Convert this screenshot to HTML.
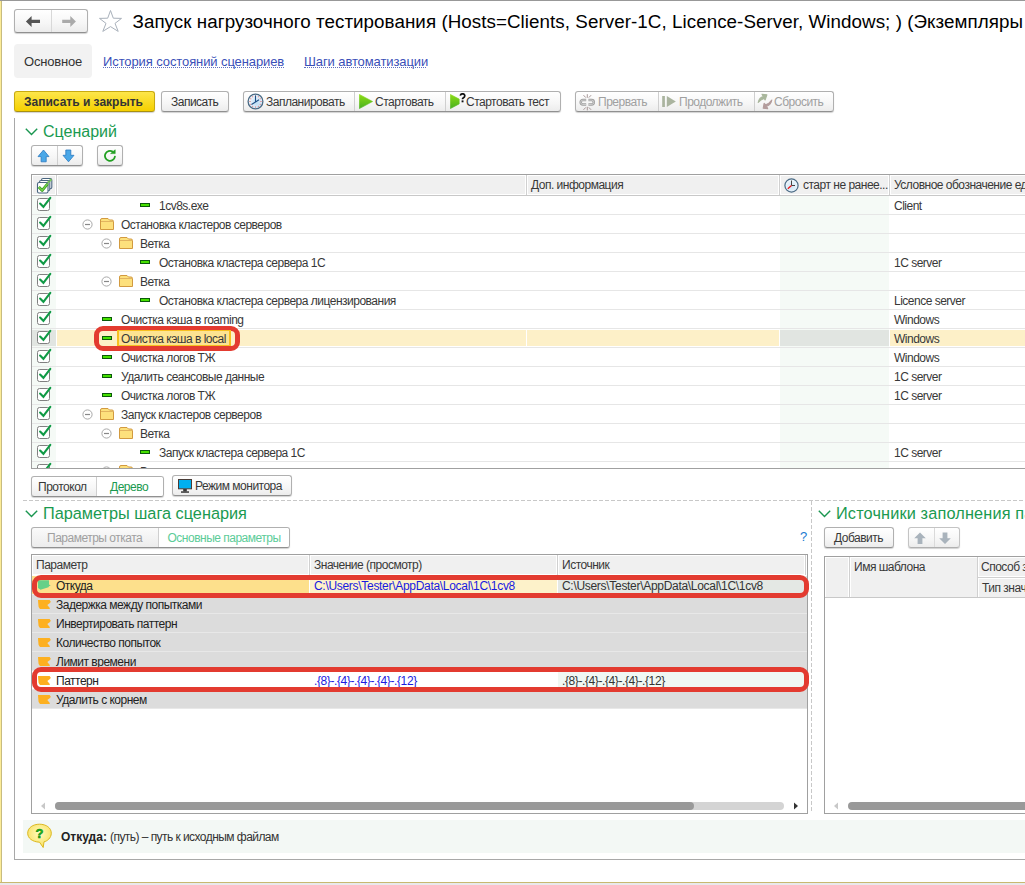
<!DOCTYPE html><html><head><meta charset="utf-8"><style>
*{box-sizing:border-box;margin:0;padding:0}
html,body{width:1025px;height:885px;overflow:hidden;background:#fff}
body{position:relative;font-family:"Liberation Sans",sans-serif;color:#333}
.t{position:absolute;white-space:nowrap;font-size:12px;letter-spacing:-0.5px;color:#383838}
.btn{position:absolute;border:1px solid #b0b0b0;border-bottom-color:#909090;border-radius:3px;background:linear-gradient(#ffffff,#f6f6f6 60%,#ececec);box-shadow:0 1px 1px rgba(0,0,0,0.18)}
.sep{position:absolute;top:0;bottom:0;width:1px;background:#cfcfcf}
.hl{position:absolute;height:1px;background:#e4e4e4}
</style></head><body>
<div style="position:absolute;left:0px;top:0px;width:1025px;height:1px;background:#989898"></div>
<div style="position:absolute;left:0px;top:1px;width:1px;height:882px;background:#fcec98"></div>
<div style="position:absolute;left:1px;top:1px;width:1px;height:882px;background:#c8bc80"></div>
<div style="position:absolute;left:0px;top:882px;width:1025px;height:1px;background:#c8b870"></div>
<div style="position:absolute;left:0px;top:883px;width:1025px;height:2px;background:#e9e9ec"></div>
<div class="btn" style="left:14px;top:9px;width:74px;height:24px"><div class="sep" style="left:36px;background:#d8d8d8"></div></div>
<svg style="position:absolute;left:25px;top:16px" width="16" height="12" viewBox="0 0 16 12"><path d="M0.9 5.4 L6.6 0 L6.6 3.8 L15 3.8 L15 6.9 L6.6 6.9 L6.6 11 Z" fill="#555"/></svg>
<svg style="position:absolute;left:62px;top:16px" width="16" height="12" viewBox="0 0 16 12"><path d="M13.9 5.4 L8.3 0 L8.3 3.8 L0.2 3.8 L0.2 6.9 L8.3 6.9 L8.3 11 Z" fill="#aaa"/></svg>
<svg style="position:absolute;left:98px;top:9px" width="25" height="24" viewBox="0 0 25 24"><path d="M12.5 1.5 L15.3 9.2 L23.5 9.4 L17 14.4 L20.2 22.4 L12.5 17.6 L4.8 22.4 L8 14.4 L1.5 9.4 L9.7 9.2 Z" fill="none" stroke="#a9b1bb" stroke-width="1"/></svg>
<div class="t" style="left:132.5px;top:10px;height:24px;line-height:24px;font-size:18.8px;letter-spacing:0.055px;color:#000">Запуск нагрузочного тестирования (Hosts=Clients, Server-1C, Licence-Server, Windows; ) (Экземпляры</div>
<div style="position:absolute;left:14px;top:44px;width:78px;height:34px;background:#f2f2f2;border-radius:4px"></div>
<div class="t" style="left:24px;top:53px;height:18px;line-height:18px;font-size:13px;letter-spacing:-0.2px;color:#333">Основное</div>
<div class="t" style="left:103px;top:53px;height:18px;line-height:18px;font-size:13px;letter-spacing:-0.1px;color:#3a4fb8;">История состояний сценариев</div>
<div style="position:absolute;left:103px;top:67px;width:181px;height:1px;border-top:1px dotted #6070c0"></div>
<div class="t" style="left:304px;top:53px;height:18px;line-height:18px;font-size:13px;letter-spacing:-0.1px;color:#3a4fb8;">Шаги автоматизации</div>
<div style="position:absolute;left:304px;top:67px;width:122px;height:1px;border-top:1px dotted #6070c0"></div>
<div class="btn" style="left:14px;top:91px;width:141px;height:21px;background:linear-gradient(#fde64a,#f5d000);border-color:#c8aa10;border-bottom-color:#a89010"></div>
<div class="t" style="left:24px;top:93px;height:18px;line-height:18px;font-size:12px;font-weight:bold;letter-spacing:0;color:#333">Записать и закрыть</div>
<div class="btn" style="left:161px;top:91px;width:68px;height:21px"></div>
<div class="t" style="left:171px;top:93px;height:18px;line-height:18px;color:#333">Записать</div>
<div class="btn" style="left:243px;top:91px;width:318px;height:21px"><div class="sep" style="left:110px"></div><div class="sep" style="left:201px"></div></div>
<svg style="position:absolute;left:247px;top:93px" width="17" height="17" viewBox="0 0 17 17">
<defs><radialGradient id="cg" cx="0.6" cy="0.6" r="0.6"><stop offset="0" stop-color="#bcdcf4"/><stop offset="1" stop-color="#f4f8fc"/></radialGradient></defs>
<circle cx="8.5" cy="8.5" r="7.4" fill="url(#cg)" stroke="#4a6a84" stroke-width="1.3"/>
<g fill="#e05050"><circle cx="8.5" cy="3" r="0.6"/><circle cx="8.5" cy="14" r="0.6"/><circle cx="3" cy="8.5" r="0.6"/><circle cx="14" cy="8.5" r="0.6"/><circle cx="5.7" cy="3.8" r="0.5"/><circle cx="11.3" cy="3.8" r="0.5"/><circle cx="5.7" cy="13.2" r="0.5"/><circle cx="11.3" cy="13.2" r="0.5"/><circle cx="3.8" cy="5.7" r="0.5"/><circle cx="13.2" cy="5.7" r="0.5"/><circle cx="3.8" cy="11.3" r="0.5"/><circle cx="13.2" cy="11.3" r="0.5"/></g>
<path d="M8.5 2.5 V9 L12 6.8 M8.5 9 L4.5 11.5" stroke="#1d4f86" stroke-width="1.1" fill="none"/></svg>
<div class="t" style="left:266px;top:93px;height:18px;line-height:18px;">Запланировать</div>
<svg style="position:absolute;left:359px;top:94px" width="14" height="15" viewBox="0 0 14 15"><defs><linearGradient id="pg1" x1="0" y1="0" x2="0" y2="1"><stop offset="0" stop-color="#8cdc14"/><stop offset="1" stop-color="#48b020"/></linearGradient></defs><path d="M0.4 0.4 L13.6 7.5 L0.4 14.6 Z" fill="url(#pg1)" stroke="url(#pg1)" stroke-width="0.6" stroke-linejoin="round"/></svg>
<div class="t" style="left:375px;top:93px;height:18px;line-height:18px;">Стартовать</div>
<svg style="position:absolute;left:450px;top:94px" width="14" height="15" viewBox="0 0 14 15"><defs><linearGradient id="pg2" x1="0" y1="0" x2="0" y2="1"><stop offset="0" stop-color="#8cdc14"/><stop offset="1" stop-color="#48b020"/></linearGradient></defs><path d="M0.4 0.4 L9.2 5.1 L9.2 9.9 L0.4 14.6 Z" fill="url(#pg2)" stroke="url(#pg2)" stroke-width="0.6" stroke-linejoin="round"/></svg>
<svg style="position:absolute;left:459px;top:93px" width="7" height="10" viewBox="0 0 7 10"><path d="M1.3 2.6 Q1.5 0.8 3.5 0.8 Q5.8 0.8 5.8 2.8 Q5.8 4.2 4.2 5 Q3.5 5.4 3.5 6.3" stroke="#111" stroke-width="1.7" fill="none"/><rect x="2.6" y="7.4" width="1.9" height="1.9" fill="#111"/></svg>
<div class="t" style="left:466px;top:93px;height:18px;line-height:18px;">Стартовать тест</div>
<div class="btn" style="left:575px;top:91px;width:259px;height:21px"><div class="sep" style="left:82px"></div><div class="sep" style="left:178px"></div></div>
<svg style="position:absolute;left:579px;top:93px" width="17" height="19" viewBox="0 0 17 19" fill="none">
<path d="M7.2 7.1 H3.9 A2.2 2.2 0 0 0 3.9 11.5 H7.2 M9.4 7.1 H12.6 A2.2 2.2 0 0 1 12.6 11.5 H9.4" stroke="#a0a0a0" stroke-width="2.5"/>
<path d="M7.2 7.1 H3.9 A2.2 2.2 0 0 0 3.9 11.5 H7.2 M9.4 7.1 H12.6 A2.2 2.2 0 0 1 12.6 11.5 H9.4" stroke="#dcdcdc" stroke-width="0.7"/>
<path d="M8.3 1.2 V4.8 M4.5 2.2 L6.8 4.6 M12.1 2.2 L9.8 4.6 M8.3 13.8 V17.4 M4.5 16.8 L6.8 14.4 M12.1 16.8 L9.8 14.4" stroke="#a89898" stroke-width="1"/></svg>
<div class="t" style="left:598px;top:93px;height:18px;line-height:18px;color:#a0a0a0">Прервать</div>
<svg style="position:absolute;left:662px;top:96px" width="14" height="11" viewBox="0 0 14 11"><rect x="0.2" y="0" width="2.7" height="11" fill="#aab49f"/><path d="M4.8 0 L13.8 5.5 L4.8 11 Z" fill="#aab49f"/></svg>
<div class="t" style="left:679px;top:93px;height:18px;line-height:18px;color:#a0a0a0">Продолжить</div>
<svg style="position:absolute;left:756px;top:93px" width="18" height="18" viewBox="0 0 18 18">
<path d="M2.2 9.5 Q3.2 4.6 7.4 3.6 L6 1.2 L10.9 1.8 L9.1 7 L8.2 5.4 Q5 6.2 2.2 9.5 Z" fill="#a9b79c" stroke="#a9b79c" stroke-width="1.1" stroke-linejoin="round"/>
<path d="M15.8 7 Q15.2 12 10.6 13.1 L11.7 15.8 L7.2 15.3 L8.1 10.4 L9.6 11.7 Q13 11 15.8 7 Z" fill="#b39c9c" stroke="#b39c9c" stroke-width="1.1" stroke-linejoin="round"/></svg>
<div class="t" style="left:774px;top:93px;height:18px;line-height:18px;color:#a0a0a0">Сбросить</div>
<div style="position:absolute;left:14px;top:118px;width:1px;height:742px;background:#a8a8a8"></div>
<div style="position:absolute;left:14px;top:859px;width:1011px;height:1px;background:#a8a8a8"></div>
<svg style="position:absolute;left:25px;top:128px" width="13" height="8" viewBox="0 0 13 8"><path d="M0.8 0.8 L6.5 6.5 L12.2 0.8" stroke="#1a9650" stroke-width="1.4" fill="none"/></svg>
<div class="t" style="left:43px;top:121px;height:22px;line-height:22px;font-size:16px;letter-spacing:0;color:#1a9a50">Сценарий</div>
<div class="btn" style="left:31px;top:145px;width:52px;height:21px"><div class="sep" style="left:25px"></div></div>
<svg style="position:absolute;left:37px;top:149px" width="13" height="14" viewBox="0 0 13 14"><path d="M6.5 1 L12 7.6 L9.2 7.6 L9.2 12.8 L4.1 12.8 L4.1 7.6 L1 7.6 Z" fill="#4aa8e8" stroke="#2a78c0" stroke-width="0.8"/></svg>
<svg style="position:absolute;left:62px;top:149px" width="13" height="14" viewBox="0 0 13 14"><path d="M6.5 12.8 L12 6.3 L8.8 6.3 L8.8 1 L3.8 1 L3.8 6.3 L1 6.3 Z" fill="#4aa8e8" stroke="#2a78c0" stroke-width="0.8"/></svg>
<div class="btn" style="left:97px;top:145px;width:26px;height:21px"></div>
<svg style="position:absolute;left:103px;top:148px" width="14" height="14" viewBox="0 0 14 14"><path d="M11.9 8.6 A5 5 0 1 1 9.6 3.6" stroke="#22a022" stroke-width="1.8" fill="none" stroke-linecap="round"/><path d="M7.6 5.6 L12.2 5.6 L12.2 1.8 Z" fill="#22a022" stroke="#22a022" stroke-width="0.6" stroke-linejoin="round"/></svg>
<div style="position:absolute;left:31px;top:174px;width:1000px;height:295px;border:1px solid #a0a0a0;background:#fff"></div>
<div style="position:absolute;left:33px;top:176px;width:22px;height:18px;background:#f0f0f0"></div>
<div style="position:absolute;left:56px;top:175px;width:1px;height:20px;background:#d0d0d0"></div>
<div style="position:absolute;left:58px;top:176px;width:467px;height:18px;background:#f0f0f0"></div>
<div style="position:absolute;left:526px;top:175px;width:1px;height:20px;background:#d0d0d0"></div>
<div style="position:absolute;left:528px;top:176px;width:250px;height:18px;background:#f0f0f0"></div>
<div style="position:absolute;left:779px;top:175px;width:1px;height:20px;background:#d0d0d0"></div>
<div style="position:absolute;left:781px;top:176px;width:107px;height:18px;background:#f0f0f0"></div>
<div style="position:absolute;left:889px;top:175px;width:1px;height:20px;background:#d0d0d0"></div>
<div style="position:absolute;left:891px;top:176px;width:140px;height:18px;background:#f0f0f0"></div>
<div style="position:absolute;left:32px;top:195px;width:1000px;height:1px;background:#c8c8c8"></div>
<svg style="position:absolute;left:36px;top:177px" width="17" height="17" viewBox="0 0 17 17">
<rect x="5.5" y="1.5" width="10.3" height="10.3" rx="1.6" fill="#fff" stroke="#4a6680" stroke-width="1.1"/>
<path d="M11.5 6 L15.3 2.2" stroke="#7ac85a" stroke-width="2.2"/>
<rect x="3.5" y="3.5" width="10.3" height="10.3" rx="1.6" fill="#fff" stroke="#4a6680" stroke-width="1.1"/>
<path d="M9.5 8 L13.3 4.2" stroke="#7ac85a" stroke-width="2.2"/>
<rect x="1.5" y="5.5" width="10.5" height="10.5" rx="1.6" fill="#fff" stroke="#4a6680" stroke-width="1.1"/>
<path d="M2.8 10 L6.2 13.4 L11.6 6.8" stroke="#2e9a1e" stroke-width="2.8" fill="none" stroke-linejoin="round"/>
<path d="M2.8 10 L6.2 13.4 L11.6 6.8" stroke="#76d04a" stroke-width="1.4" fill="none" stroke-linejoin="round"/></svg>
<div class="t" style="left:531px;top:176px;height:18px;line-height:18px;">Доп. информация</div>
<svg style="position:absolute;left:784px;top:178px" width="15" height="15" viewBox="0 0 15 15"><defs><radialGradient id="cg2" cx="0.5" cy="0.6" r="0.6"><stop offset="0" stop-color="#cfe6f7"/><stop offset="1" stop-color="#f2f8fc"/></radialGradient></defs>
<circle cx="7.5" cy="7.5" r="6.6" fill="url(#cg2)" stroke="#4a6a84" stroke-width="1.2"/><path d="M7.5 2.5 V7.5 H11" stroke="#444" stroke-width="1" fill="none"/><path d="M7.5 7.5 L3.8 10.8" stroke="#f01010" stroke-width="1.2"/></svg>
<div class="t" style="left:803px;top:176px;height:18px;line-height:18px;">старт не ранее...</div>
<div class="t" style="left:894px;top:176px;height:18px;line-height:18px;">Условное обозначение ед</div>
<div style="position:absolute;left:32px;top:196px;width:24px;height:272px;background:#f5faf6"></div>
<div style="position:absolute;left:780px;top:196px;width:109px;height:272px;background:#f5faf6"></div>
<div style="position:absolute;left:0;top:0;width:1025px;height:468px;overflow:hidden">
<div style="position:absolute;left:32px;top:214px;width:1000px;height:1px;background:#e6e6e6"></div>
<svg style="position:absolute;left:37px;top:196px" width="15" height="15" viewBox="0 0 15 15"><rect x="0.5" y="2.5" width="12" height="12" rx="2" fill="#fff" stroke="#808080" stroke-width="1"/><path d="M3.1 7.5 L6.4 10.8 L13.3 1.8" stroke="#0f9a45" stroke-width="2.1" fill="none" stroke-linecap="round"/></svg>
<div style="position:absolute;left:140px;top:203px;width:10px;height:4px;background:#46e000;border:1px solid #0a5a0a"></div>
<div class="t" style="left:159px;top:197px;height:18px;line-height:18px;">1cv8s.exe</div>
<div class="t" style="left:894px;top:197px;height:18px;line-height:18px;">Client</div>
<div style="position:absolute;left:32px;top:233px;width:1000px;height:1px;background:#e6e6e6"></div>
<svg style="position:absolute;left:37px;top:215px" width="15" height="15" viewBox="0 0 15 15"><rect x="0.5" y="2.5" width="12" height="12" rx="2" fill="#fff" stroke="#808080" stroke-width="1"/><path d="M3.1 7.5 L6.4 10.8 L13.3 1.8" stroke="#0f9a45" stroke-width="2.1" fill="none" stroke-linecap="round"/></svg>
<svg style="position:absolute;left:82px;top:219px" width="11" height="11" viewBox="0 0 11 11"><circle cx="5.5" cy="5.5" r="4.6" fill="#fff" stroke="#a8a8a8" stroke-width="1"/><path d="M3 5.5 H8" stroke="#888" stroke-width="1.2"/></svg>
<svg style="position:absolute;left:100px;top:218px" width="14" height="12" viewBox="0 0 14 12"><path d="M0.5 11.5 V2 Q0.5 0.5 2 0.5 H8 L9.5 2 H12 Q13.5 2 13.5 3.5 V11.5 Z" fill="#fde07c" stroke="#d29a40" stroke-width="1"/><path d="M1 3.5 H13" stroke="#e2b460" stroke-width="1"/></svg>
<div class="t" style="left:121px;top:216px;height:18px;line-height:18px;">Остановка кластеров серверов</div>
<div style="position:absolute;left:32px;top:252px;width:1000px;height:1px;background:#e6e6e6"></div>
<svg style="position:absolute;left:37px;top:234px" width="15" height="15" viewBox="0 0 15 15"><rect x="0.5" y="2.5" width="12" height="12" rx="2" fill="#fff" stroke="#808080" stroke-width="1"/><path d="M3.1 7.5 L6.4 10.8 L13.3 1.8" stroke="#0f9a45" stroke-width="2.1" fill="none" stroke-linecap="round"/></svg>
<svg style="position:absolute;left:101px;top:238px" width="11" height="11" viewBox="0 0 11 11"><circle cx="5.5" cy="5.5" r="4.6" fill="#fff" stroke="#a8a8a8" stroke-width="1"/><path d="M3 5.5 H8" stroke="#888" stroke-width="1.2"/></svg>
<svg style="position:absolute;left:119px;top:237px" width="14" height="12" viewBox="0 0 14 12"><path d="M0.5 11.5 V2 Q0.5 0.5 2 0.5 H8 L9.5 2 H12 Q13.5 2 13.5 3.5 V11.5 Z" fill="#fde07c" stroke="#d29a40" stroke-width="1"/><path d="M1 3.5 H13" stroke="#e2b460" stroke-width="1"/></svg>
<div class="t" style="left:140px;top:235px;height:18px;line-height:18px;">Ветка</div>
<div style="position:absolute;left:32px;top:271px;width:1000px;height:1px;background:#e6e6e6"></div>
<svg style="position:absolute;left:37px;top:253px" width="15" height="15" viewBox="0 0 15 15"><rect x="0.5" y="2.5" width="12" height="12" rx="2" fill="#fff" stroke="#808080" stroke-width="1"/><path d="M3.1 7.5 L6.4 10.8 L13.3 1.8" stroke="#0f9a45" stroke-width="2.1" fill="none" stroke-linecap="round"/></svg>
<div style="position:absolute;left:140px;top:260px;width:10px;height:4px;background:#46e000;border:1px solid #0a5a0a"></div>
<div class="t" style="left:159px;top:254px;height:18px;line-height:18px;">Остановка кластера сервера 1С</div>
<div class="t" style="left:894px;top:254px;height:18px;line-height:18px;">1C server</div>
<div style="position:absolute;left:32px;top:290px;width:1000px;height:1px;background:#e6e6e6"></div>
<svg style="position:absolute;left:37px;top:272px" width="15" height="15" viewBox="0 0 15 15"><rect x="0.5" y="2.5" width="12" height="12" rx="2" fill="#fff" stroke="#808080" stroke-width="1"/><path d="M3.1 7.5 L6.4 10.8 L13.3 1.8" stroke="#0f9a45" stroke-width="2.1" fill="none" stroke-linecap="round"/></svg>
<svg style="position:absolute;left:101px;top:276px" width="11" height="11" viewBox="0 0 11 11"><circle cx="5.5" cy="5.5" r="4.6" fill="#fff" stroke="#a8a8a8" stroke-width="1"/><path d="M3 5.5 H8" stroke="#888" stroke-width="1.2"/></svg>
<svg style="position:absolute;left:119px;top:275px" width="14" height="12" viewBox="0 0 14 12"><path d="M0.5 11.5 V2 Q0.5 0.5 2 0.5 H8 L9.5 2 H12 Q13.5 2 13.5 3.5 V11.5 Z" fill="#fde07c" stroke="#d29a40" stroke-width="1"/><path d="M1 3.5 H13" stroke="#e2b460" stroke-width="1"/></svg>
<div class="t" style="left:140px;top:273px;height:18px;line-height:18px;">Ветка</div>
<div style="position:absolute;left:32px;top:309px;width:1000px;height:1px;background:#e6e6e6"></div>
<svg style="position:absolute;left:37px;top:291px" width="15" height="15" viewBox="0 0 15 15"><rect x="0.5" y="2.5" width="12" height="12" rx="2" fill="#fff" stroke="#808080" stroke-width="1"/><path d="M3.1 7.5 L6.4 10.8 L13.3 1.8" stroke="#0f9a45" stroke-width="2.1" fill="none" stroke-linecap="round"/></svg>
<div style="position:absolute;left:140px;top:298px;width:10px;height:4px;background:#46e000;border:1px solid #0a5a0a"></div>
<div class="t" style="left:159px;top:292px;height:18px;line-height:18px;">Остановка кластера сервера лицензирования</div>
<div class="t" style="left:894px;top:292px;height:18px;line-height:18px;">Licence server</div>
<div style="position:absolute;left:32px;top:328px;width:1000px;height:1px;background:#e6e6e6"></div>
<svg style="position:absolute;left:37px;top:310px" width="15" height="15" viewBox="0 0 15 15"><rect x="0.5" y="2.5" width="12" height="12" rx="2" fill="#fff" stroke="#808080" stroke-width="1"/><path d="M3.1 7.5 L6.4 10.8 L13.3 1.8" stroke="#0f9a45" stroke-width="2.1" fill="none" stroke-linecap="round"/></svg>
<div style="position:absolute;left:102px;top:317px;width:10px;height:4px;background:#46e000;border:1px solid #0a5a0a"></div>
<div class="t" style="left:121px;top:311px;height:18px;line-height:18px;">Очистка кэша в roaming</div>
<div class="t" style="left:894px;top:311px;height:18px;line-height:18px;">Windows</div>
<div style="position:absolute;left:32px;top:330px;width:24px;height:16px;background:#e1e5e1"></div>
<div style="position:absolute;left:57px;top:330px;width:469px;height:16px;background:#fdf0c8"></div>
<div style="position:absolute;left:527px;top:330px;width:252px;height:16px;background:#fdf0c8"></div>
<div style="position:absolute;left:780px;top:330px;width:109px;height:16px;background:#e1e5e1"></div>
<div style="position:absolute;left:890px;top:330px;width:140px;height:16px;background:#fdf0c8"></div>
<div style="position:absolute;left:32px;top:347px;width:1000px;height:1px;background:#e6e6e6"></div>
<svg style="position:absolute;left:37px;top:329px" width="15" height="15" viewBox="0 0 15 15"><rect x="0.5" y="2.5" width="12" height="12" rx="2" fill="#fff" stroke="#808080" stroke-width="1"/><path d="M3.1 7.5 L6.4 10.8 L13.3 1.8" stroke="#0f9a45" stroke-width="2.1" fill="none" stroke-linecap="round"/></svg>
<div style="position:absolute;left:102px;top:336px;width:10px;height:4px;background:#46e000;border:1px solid #0a5a0a"></div>
<div class="t" style="left:894px;top:330px;height:18px;line-height:18px;">Windows</div>
<div style="position:absolute;left:32px;top:366px;width:1000px;height:1px;background:#e6e6e6"></div>
<svg style="position:absolute;left:37px;top:348px" width="15" height="15" viewBox="0 0 15 15"><rect x="0.5" y="2.5" width="12" height="12" rx="2" fill="#fff" stroke="#808080" stroke-width="1"/><path d="M3.1 7.5 L6.4 10.8 L13.3 1.8" stroke="#0f9a45" stroke-width="2.1" fill="none" stroke-linecap="round"/></svg>
<div style="position:absolute;left:102px;top:355px;width:10px;height:4px;background:#46e000;border:1px solid #0a5a0a"></div>
<div class="t" style="left:121px;top:349px;height:18px;line-height:18px;">Очистка логов ТЖ</div>
<div class="t" style="left:894px;top:349px;height:18px;line-height:18px;">Windows</div>
<div style="position:absolute;left:32px;top:385px;width:1000px;height:1px;background:#e6e6e6"></div>
<svg style="position:absolute;left:37px;top:367px" width="15" height="15" viewBox="0 0 15 15"><rect x="0.5" y="2.5" width="12" height="12" rx="2" fill="#fff" stroke="#808080" stroke-width="1"/><path d="M3.1 7.5 L6.4 10.8 L13.3 1.8" stroke="#0f9a45" stroke-width="2.1" fill="none" stroke-linecap="round"/></svg>
<div style="position:absolute;left:102px;top:374px;width:10px;height:4px;background:#46e000;border:1px solid #0a5a0a"></div>
<div class="t" style="left:121px;top:368px;height:18px;line-height:18px;">Удалить сеансовые данные</div>
<div class="t" style="left:894px;top:368px;height:18px;line-height:18px;">1C server</div>
<div style="position:absolute;left:32px;top:404px;width:1000px;height:1px;background:#e6e6e6"></div>
<svg style="position:absolute;left:37px;top:386px" width="15" height="15" viewBox="0 0 15 15"><rect x="0.5" y="2.5" width="12" height="12" rx="2" fill="#fff" stroke="#808080" stroke-width="1"/><path d="M3.1 7.5 L6.4 10.8 L13.3 1.8" stroke="#0f9a45" stroke-width="2.1" fill="none" stroke-linecap="round"/></svg>
<div style="position:absolute;left:102px;top:393px;width:10px;height:4px;background:#46e000;border:1px solid #0a5a0a"></div>
<div class="t" style="left:121px;top:387px;height:18px;line-height:18px;">Очистка логов ТЖ</div>
<div class="t" style="left:894px;top:387px;height:18px;line-height:18px;">1C server</div>
<div style="position:absolute;left:32px;top:423px;width:1000px;height:1px;background:#e6e6e6"></div>
<svg style="position:absolute;left:37px;top:405px" width="15" height="15" viewBox="0 0 15 15"><rect x="0.5" y="2.5" width="12" height="12" rx="2" fill="#fff" stroke="#808080" stroke-width="1"/><path d="M3.1 7.5 L6.4 10.8 L13.3 1.8" stroke="#0f9a45" stroke-width="2.1" fill="none" stroke-linecap="round"/></svg>
<svg style="position:absolute;left:82px;top:409px" width="11" height="11" viewBox="0 0 11 11"><circle cx="5.5" cy="5.5" r="4.6" fill="#fff" stroke="#a8a8a8" stroke-width="1"/><path d="M3 5.5 H8" stroke="#888" stroke-width="1.2"/></svg>
<svg style="position:absolute;left:100px;top:408px" width="14" height="12" viewBox="0 0 14 12"><path d="M0.5 11.5 V2 Q0.5 0.5 2 0.5 H8 L9.5 2 H12 Q13.5 2 13.5 3.5 V11.5 Z" fill="#fde07c" stroke="#d29a40" stroke-width="1"/><path d="M1 3.5 H13" stroke="#e2b460" stroke-width="1"/></svg>
<div class="t" style="left:121px;top:406px;height:18px;line-height:18px;">Запуск кластеров серверов</div>
<div style="position:absolute;left:32px;top:442px;width:1000px;height:1px;background:#e6e6e6"></div>
<svg style="position:absolute;left:37px;top:424px" width="15" height="15" viewBox="0 0 15 15"><rect x="0.5" y="2.5" width="12" height="12" rx="2" fill="#fff" stroke="#808080" stroke-width="1"/><path d="M3.1 7.5 L6.4 10.8 L13.3 1.8" stroke="#0f9a45" stroke-width="2.1" fill="none" stroke-linecap="round"/></svg>
<svg style="position:absolute;left:101px;top:428px" width="11" height="11" viewBox="0 0 11 11"><circle cx="5.5" cy="5.5" r="4.6" fill="#fff" stroke="#a8a8a8" stroke-width="1"/><path d="M3 5.5 H8" stroke="#888" stroke-width="1.2"/></svg>
<svg style="position:absolute;left:119px;top:427px" width="14" height="12" viewBox="0 0 14 12"><path d="M0.5 11.5 V2 Q0.5 0.5 2 0.5 H8 L9.5 2 H12 Q13.5 2 13.5 3.5 V11.5 Z" fill="#fde07c" stroke="#d29a40" stroke-width="1"/><path d="M1 3.5 H13" stroke="#e2b460" stroke-width="1"/></svg>
<div class="t" style="left:140px;top:425px;height:18px;line-height:18px;">Ветка</div>
<div style="position:absolute;left:32px;top:461px;width:1000px;height:1px;background:#e6e6e6"></div>
<svg style="position:absolute;left:37px;top:443px" width="15" height="15" viewBox="0 0 15 15"><rect x="0.5" y="2.5" width="12" height="12" rx="2" fill="#fff" stroke="#808080" stroke-width="1"/><path d="M3.1 7.5 L6.4 10.8 L13.3 1.8" stroke="#0f9a45" stroke-width="2.1" fill="none" stroke-linecap="round"/></svg>
<div style="position:absolute;left:140px;top:450px;width:10px;height:4px;background:#46e000;border:1px solid #0a5a0a"></div>
<div class="t" style="left:159px;top:444px;height:18px;line-height:18px;">Запуск кластера сервера 1С</div>
<div class="t" style="left:894px;top:444px;height:18px;line-height:18px;">1C server</div>
<svg style="position:absolute;left:37px;top:462px" width="15" height="15" viewBox="0 0 15 15"><rect x="0.5" y="2.5" width="12" height="12" rx="2" fill="#fff" stroke="#808080" stroke-width="1"/><path d="M3.1 7.5 L6.4 10.8 L13.3 1.8" stroke="#0f9a45" stroke-width="2.1" fill="none" stroke-linecap="round"/></svg>
<svg style="position:absolute;left:101px;top:466px" width="11" height="11" viewBox="0 0 11 11"><circle cx="5.5" cy="5.5" r="4.6" fill="#fff" stroke="#a8a8a8" stroke-width="1"/><path d="M3 5.5 H8" stroke="#888" stroke-width="1.2"/></svg>
<svg style="position:absolute;left:119px;top:465px" width="14" height="12" viewBox="0 0 14 12"><path d="M0.5 11.5 V2 Q0.5 0.5 2 0.5 H8 L9.5 2 H12 Q13.5 2 13.5 3.5 V11.5 Z" fill="#fde07c" stroke="#d29a40" stroke-width="1"/><path d="M1 3.5 H13" stroke="#e2b460" stroke-width="1"/></svg>
<div class="t" style="left:140px;top:463px;height:18px;line-height:18px;">Ветка</div>
</div>
<div style="position:absolute;left:31px;top:468px;width:1000px;height:1px;background:#a0a0a0"></div>
<div style="position:absolute;left:31px;top:469px;width:1000px;height:4px;background:#fff"></div>
<div style="position:absolute;left:94px;top:326px;width:146px;height:24.5px;border:5px solid #e33b30;border-radius:9px"></div>
<div style="position:absolute;left:117px;top:330px;width:114px;height:16px;border:1px solid #f7c020;border-left-width:2px;border-right-width:2px;background:#fde391"></div>
<div class="t" style="left:121px;top:330px;height:18px;line-height:18px;">Очистка кэша в local</div>
<div class="btn" style="left:31px;top:476px;width:133px;height:21px"><div class="sep" style="left:64px"></div><div style="position:absolute;left:65px;top:0;right:0;bottom:0;background:#fff;border-radius:0 2px 2px 0"></div></div>
<div class="t" style="left:38px;top:478px;height:18px;line-height:18px;">Протокол</div>
<div class="t" style="left:110px;top:478px;height:18px;line-height:18px;color:#1a9a50">Дерево</div>
<div class="btn" style="left:172px;top:475px;width:120px;height:21px"></div>
<svg style="position:absolute;left:178px;top:479px" width="14" height="15" viewBox="0 0 14 15"><rect x="0.5" y="0.5" width="13" height="9.3" fill="#00b0f0" stroke="#4a3c36" stroke-width="1"/><rect x="5.2" y="10" width="3.6" height="2.5" fill="#3a3a3a"/><rect x="3" y="12.3" width="8" height="1.5" fill="#3a3a3a"/></svg>
<div class="t" style="left:195px;top:477px;height:18px;line-height:18px;">Режим монитора</div>
<div style="position:absolute;left:23px;top:500px;width:1002px;height:1px;background-image:linear-gradient(to right,#c8c8c8 60%,transparent 60%);background-size:6px 1px"></div>
<div style="position:absolute;left:811px;top:501px;width:1px;height:312px;background-image:linear-gradient(to bottom,#c8c8c8 60%,transparent 60%);background-size:1px 6px"></div>
<svg style="position:absolute;left:25px;top:510px" width="13" height="8" viewBox="0 0 13 8"><path d="M0.8 0.8 L6.5 6.5 L12.2 0.8" stroke="#1a9650" stroke-width="1.4" fill="none"/></svg>
<div class="t" style="left:43px;top:502px;height:22px;line-height:22px;font-size:16.3px;letter-spacing:0;color:#1a9a50">Параметры шага сценария</div>
<div class="btn" style="left:31px;top:527px;width:259px;height:21px;background:linear-gradient(#fafafa,#ececec)"><div class="sep" style="left:126px"></div><div style="position:absolute;left:127px;top:0;right:0;bottom:0;background:#fff;border-radius:0 2px 2px 0"></div></div>
<div class="t" style="left:47px;top:529px;height:18px;line-height:18px;color:#a0a0a0">Параметры отката</div>
<div class="t" style="left:167.5px;top:529px;height:18px;line-height:18px;color:#5ccc98">Основные параметры</div>
<div class="t" style="left:800px;top:528px;height:18px;line-height:18px;font-size:13px;letter-spacing:0;color:#1a7ad0">?</div>
<div style="position:absolute;left:31px;top:554px;width:777px;height:260px;border:1px solid #a0a0a0;background:#fff"></div>
<div style="position:absolute;left:33px;top:556px;width:275px;height:18px;background:#f0f0f0"></div>
<div style="position:absolute;left:309px;top:555px;width:1px;height:20px;background:#d0d0d0"></div>
<div style="position:absolute;left:311px;top:556px;width:245px;height:18px;background:#f0f0f0"></div>
<div style="position:absolute;left:557px;top:555px;width:1px;height:20px;background:#d0d0d0"></div>
<div style="position:absolute;left:559px;top:556px;width:245px;height:18px;background:#f0f0f0"></div>
<div style="position:absolute;left:805px;top:555px;width:1px;height:20px;background:#d0d0d0"></div>
<div class="t" style="left:36px;top:556px;height:18px;line-height:18px;">Параметр</div>
<div class="t" style="left:314px;top:556px;height:18px;line-height:18px;">Значение (просмотр)</div>
<div class="t" style="left:562px;top:556px;height:18px;line-height:18px;">Источник</div>
<div style="position:absolute;left:32px;top:576px;width:277px;height:18px;background:#fde08c"></div>
<div style="position:absolute;left:310px;top:576px;width:247px;height:18px;background:#fdf2ca"></div>
<div style="position:absolute;left:558px;top:576px;width:249px;height:18px;background:#e4e8e4"></div>
<svg style="position:absolute;left:37px;top:580px" width="14" height="11" viewBox="0 0 14 11"><path d="M1 0.2 H12 V4.5 L13.7 5.4 L12 6.3 L11.5 7.3 L3.5 9.7 L1 8 Z" fill="#66d088"/></svg>
<div style="position:absolute;left:32px;top:594px;width:775px;height:1px;background:#e8e8e8"></div>
<div class="t" style="left:56px;top:577px;height:18px;line-height:18px;color:#222">Откуда</div>
<div style="position:absolute;left:32px;top:595px;width:775px;height:18px;background:#dcdcdc"></div>
<svg style="position:absolute;left:37px;top:599px" width="14" height="11" viewBox="0 0 14 11"><path d="M1 1 H12.6 L13.8 2.8 L13 4 L10.3 6 L13 9.3 L12.4 10 H3 L1.6 8 L1.2 4 Z" fill="#fdb020"/></svg>
<div style="position:absolute;left:32px;top:613px;width:775px;height:1px;background:#e8e8e8"></div>
<div class="t" style="left:56px;top:596px;height:18px;line-height:18px;color:#222">Задержка между попытками</div>
<div style="position:absolute;left:32px;top:614px;width:775px;height:18px;background:#dcdcdc"></div>
<svg style="position:absolute;left:37px;top:618px" width="14" height="11" viewBox="0 0 14 11"><path d="M1 1 H12.6 L13.8 2.8 L13 4 L10.3 6 L13 9.3 L12.4 10 H3 L1.6 8 L1.2 4 Z" fill="#fdb020"/></svg>
<div style="position:absolute;left:32px;top:632px;width:775px;height:1px;background:#e8e8e8"></div>
<div class="t" style="left:56px;top:615px;height:18px;line-height:18px;color:#222">Инвертировать паттерн</div>
<div style="position:absolute;left:32px;top:633px;width:775px;height:18px;background:#dcdcdc"></div>
<svg style="position:absolute;left:37px;top:637px" width="14" height="11" viewBox="0 0 14 11"><path d="M1 1 H12.6 L13.8 2.8 L13 4 L10.3 6 L13 9.3 L12.4 10 H3 L1.6 8 L1.2 4 Z" fill="#fdb020"/></svg>
<div style="position:absolute;left:32px;top:651px;width:775px;height:1px;background:#e8e8e8"></div>
<div class="t" style="left:56px;top:634px;height:18px;line-height:18px;color:#222">Количество попыток</div>
<div style="position:absolute;left:32px;top:652px;width:775px;height:18px;background:#dcdcdc"></div>
<svg style="position:absolute;left:37px;top:656px" width="14" height="11" viewBox="0 0 14 11"><path d="M1 1 H12.6 L13.8 2.8 L13 4 L10.3 6 L13 9.3 L12.4 10 H3 L1.6 8 L1.2 4 Z" fill="#fdb020"/></svg>
<div style="position:absolute;left:32px;top:670px;width:775px;height:1px;background:#e8e8e8"></div>
<div class="t" style="left:56px;top:653px;height:18px;line-height:18px;color:#222">Лимит времени</div>
<div style="position:absolute;left:558px;top:671px;width:249px;height:18px;background:#f0f7f2"></div>
<svg style="position:absolute;left:37px;top:675px" width="14" height="11" viewBox="0 0 14 11"><path d="M1 1 H12.6 L13.8 2.8 L13 4 L10.3 6 L13 9.3 L12.4 10 H3 L1.6 8 L1.2 4 Z" fill="#fdb020"/></svg>
<div style="position:absolute;left:32px;top:689px;width:775px;height:1px;background:#e8e8e8"></div>
<div class="t" style="left:56px;top:672px;height:18px;line-height:18px;color:#222">Паттерн</div>
<div style="position:absolute;left:32px;top:690px;width:775px;height:18px;background:#dcdcdc"></div>
<svg style="position:absolute;left:37px;top:694px" width="14" height="11" viewBox="0 0 14 11"><path d="M1 1 H12.6 L13.8 2.8 L13 4 L10.3 6 L13 9.3 L12.4 10 H3 L1.6 8 L1.2 4 Z" fill="#fdb020"/></svg>
<div style="position:absolute;left:32px;top:708px;width:775px;height:1px;background:#e8e8e8"></div>
<div class="t" style="left:56px;top:691px;height:18px;line-height:18px;color:#222">Удалить с корнем</div>
<div class="t" style="left:314px;top:577px;height:18px;line-height:18px;color:#1a1ae0;letter-spacing:-0.3px">C:\Users\Tester\AppData\Local\1C\1cv8</div>
<div class="t" style="left:562px;top:577px;height:18px;line-height:18px;color:#333;letter-spacing:-0.3px">C:\Users\Tester\AppData\Local\1C\1cv8</div>
<div class="t" style="left:314px;top:672px;height:18px;line-height:18px;color:#1a1ae0;letter-spacing:-0.4px">.{8}-.{4}-.{4}-.{4}-.{12}</div>
<div class="t" style="left:562px;top:672px;height:18px;line-height:18px;color:#333;letter-spacing:-0.4px">.{8}-.{4}-.{4}-.{4}-.{12}</div>
<div style="position:absolute;left:32px;top:575px;width:777px;height:23px;border:5px solid #e33b30;border-radius:9px"></div>
<div style="position:absolute;left:32px;top:667px;width:777px;height:25px;border:5px solid #e33b30;border-radius:9px"></div>
<svg style="position:absolute;left:40px;top:802px" width="6" height="8" viewBox="0 0 6 8"><path d="M5 0.5 L1 4 L5 7.5 Z" fill="#c8c8c8"/></svg>
<div style="position:absolute;left:55px;top:802px;width:729px;height:8px;background:#d4d4d4;border-radius:4px"></div>
<div style="position:absolute;left:55px;top:802px;width:639px;height:8px;background:#999;border-radius:4px"></div>
<svg style="position:absolute;left:793px;top:802px" width="6" height="8" viewBox="0 0 6 8"><path d="M1 0.5 L5 4 L1 7.5 Z" fill="#333"/></svg>
<svg style="position:absolute;left:818px;top:510px" width="13" height="8" viewBox="0 0 13 8"><path d="M0.8 0.8 L6.5 6.5 L12.2 0.8" stroke="#1a9650" stroke-width="1.4" fill="none"/></svg>
<div class="t" style="left:836px;top:502px;height:22px;line-height:22px;font-size:16.3px;letter-spacing:0.15px;color:#1a9a50">Источники заполнения параметра</div>
<div class="btn" style="left:824px;top:527px;width:70px;height:21px"></div>
<div class="t" style="left:834px;top:529px;height:18px;line-height:18px;">Добавить</div>
<div class="btn" style="left:908px;top:527px;width:52px;height:21px;border-color:#c4c4c4;border-bottom-color:#b0b0b0"><div class="sep" style="left:25px;background:#dadada"></div></div>
<svg style="position:absolute;left:914px;top:532px" width="13" height="13" viewBox="0 0 13 13"><path d="M6 0.5 L11.8 6.2 L8.4 6.2 L8.4 12 L3.6 12 L3.6 6.2 L0.2 6.2 Z" fill="#a9b3bc"/></svg>
<svg style="position:absolute;left:939px;top:532px" width="13" height="13" viewBox="0 0 13 13"><path d="M6 12 L11.8 6.3 L8.4 6.3 L8.4 0.5 L3.6 0.5 L3.6 6.3 L0.2 6.3 Z" fill="#a9b3bc"/></svg>
<div style="position:absolute;left:824px;top:556px;width:220px;height:258px;border:1px solid #a0a0a0;background:#fff"></div>
<div style="position:absolute;left:826px;top:558px;width:22px;height:39px;background:#f0f0f0"></div>
<div style="position:absolute;left:849px;top:557px;width:1px;height:41px;background:#d0d0d0"></div>
<div style="position:absolute;left:851px;top:558px;width:126px;height:39px;background:#f0f0f0"></div>
<div style="position:absolute;left:977px;top:557px;width:1px;height:41px;background:#d0d0d0"></div>
<div style="position:absolute;left:979px;top:558px;width:60px;height:18px;background:#f0f0f0"></div>
<div style="position:absolute;left:978px;top:577px;width:60px;height:1px;background:#d0d0d0"></div>
<div style="position:absolute;left:979px;top:579px;width:60px;height:18px;background:#f0f0f0"></div>
<div style="position:absolute;left:825px;top:597px;width:220px;height:1px;background:#c8c8c8"></div>
<div class="t" style="left:854px;top:558px;height:18px;line-height:18px;">Имя шаблона</div>
<div class="t" style="left:981px;top:558px;height:18px;line-height:18px;">Способ заполнения</div>
<div class="t" style="left:982px;top:579px;height:18px;line-height:18px;">Тип значения</div>
<svg style="position:absolute;left:833px;top:802px" width="6" height="8" viewBox="0 0 6 8"><path d="M5 0.5 L1 4 L5 7.5 Z" fill="#c8c8c8"/></svg>
<div style="position:absolute;left:848px;top:802px;width:200px;height:8px;background:#999;border-radius:4px"></div>
<div style="position:absolute;left:23px;top:820px;width:1002px;height:33px;background:#f3f8f5"></div>
<svg style="position:absolute;left:26px;top:823px" width="27" height="25" viewBox="0 0 27 25"><defs><radialGradient id="hg" cx="0.5" cy="0.4" r="0.6"><stop offset="0" stop-color="#fffcc0"/><stop offset="1" stop-color="#f8e060"/></radialGradient></defs>
<path d="M13.5 1.2 C20 1.2 25.3 4.7 25.3 10.2 C25.3 15 21 18.3 18 18.8 L17.2 24.5 L13.5 19.2 C6 18.8 1.7 15 1.7 10.2 C1.7 4.7 7 1.2 13.5 1.2 Z" fill="url(#hg)" stroke="#dcb820" stroke-width="1"/>
<text x="13.5" y="15" text-anchor="middle" font-family="Liberation Sans" font-weight="bold" font-size="13" fill="#18c018" stroke="#0a7a0a" stroke-width="0.5">?</text></svg>
<div class="t" style="left:61px;top:828px;height:18px;line-height:18px;font-weight:bold;letter-spacing:0;color:#222">Откуда:</div>
<div class="t" style="left:110px;top:828px;height:18px;line-height:18px;color:#333;letter-spacing:-0.55px">(путь) – путь к исходным файлам</div>
</body></html>
